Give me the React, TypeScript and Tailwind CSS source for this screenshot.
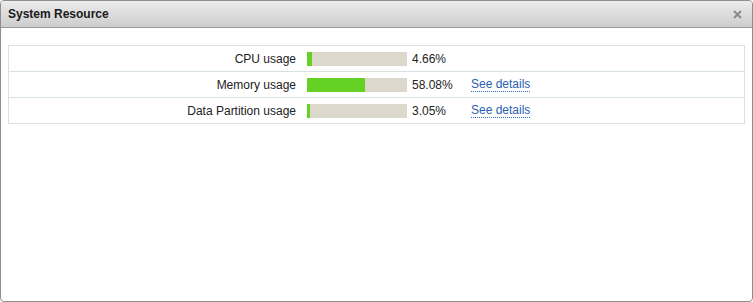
const rows = [
  { label: "CPU usage", pct: 4.66, details: false },
  { label: "Memory usage", pct: 58.08, details: true },
  { label: "Data Partition usage", pct: 3.05, details: true },
];

export default function App() {
  return (
    <div className="w-[753px] h-[302px] bg-white font-['Liberation_Sans',Arial,sans-serif] text-[12px] text-[#222]">
      <div className="flex h-full flex-col overflow-hidden rounded-[4px] border border-[#8e8e8e]">
        {/* Title bar */}
        <div className="flex h-[27px] shrink-0 items-center justify-between border-b border-[#9a9a9a] bg-gradient-to-b from-[#ececec] to-[#cdcdcd] pl-[7px] pr-[10px]">
          <span className="font-bold text-[12px] text-[#1a1a1a]">System Resource</span>
          <svg width="9" height="9" viewBox="0 0 9 9" className="mt-[1px]">
            <path d="M1 1L8 8M8 1L1 8" stroke="#8a8a8a" strokeWidth="2" />
          </svg>
        </div>

        {/* Body */}
        <div className="flex-1 px-[7px] pt-[17px]">
          <div className="border border-[#d6e2e2]">
            {rows.map((r, i) => (
              <div
                key={r.label}
                className={`flex items-center ${i > 0 ? "h-[26px] border-t border-[#d6e2e2]" : "h-[25px]"}`}
              >
                <div className="w-[287px] text-right">{r.label}</div>
                <div className="ml-[11px] h-[14px] w-[100px] bg-[#dcd8cc]">
                  <div className="h-full bg-[#66d125]" style={{ width: `${Math.max(3, Math.round(r.pct))}px` }} />
                </div>
                <div className="ml-[5px] w-[59px]">{r.pct.toFixed(2)}%</div>
                {r.details && (
                  <a className="border-b border-dotted border-[#2a6cc4] leading-[14px] text-[#2a5db0]">See details</a>
                )}
              </div>
            ))}
          </div>
        </div>
      </div>
    </div>
  );
}
